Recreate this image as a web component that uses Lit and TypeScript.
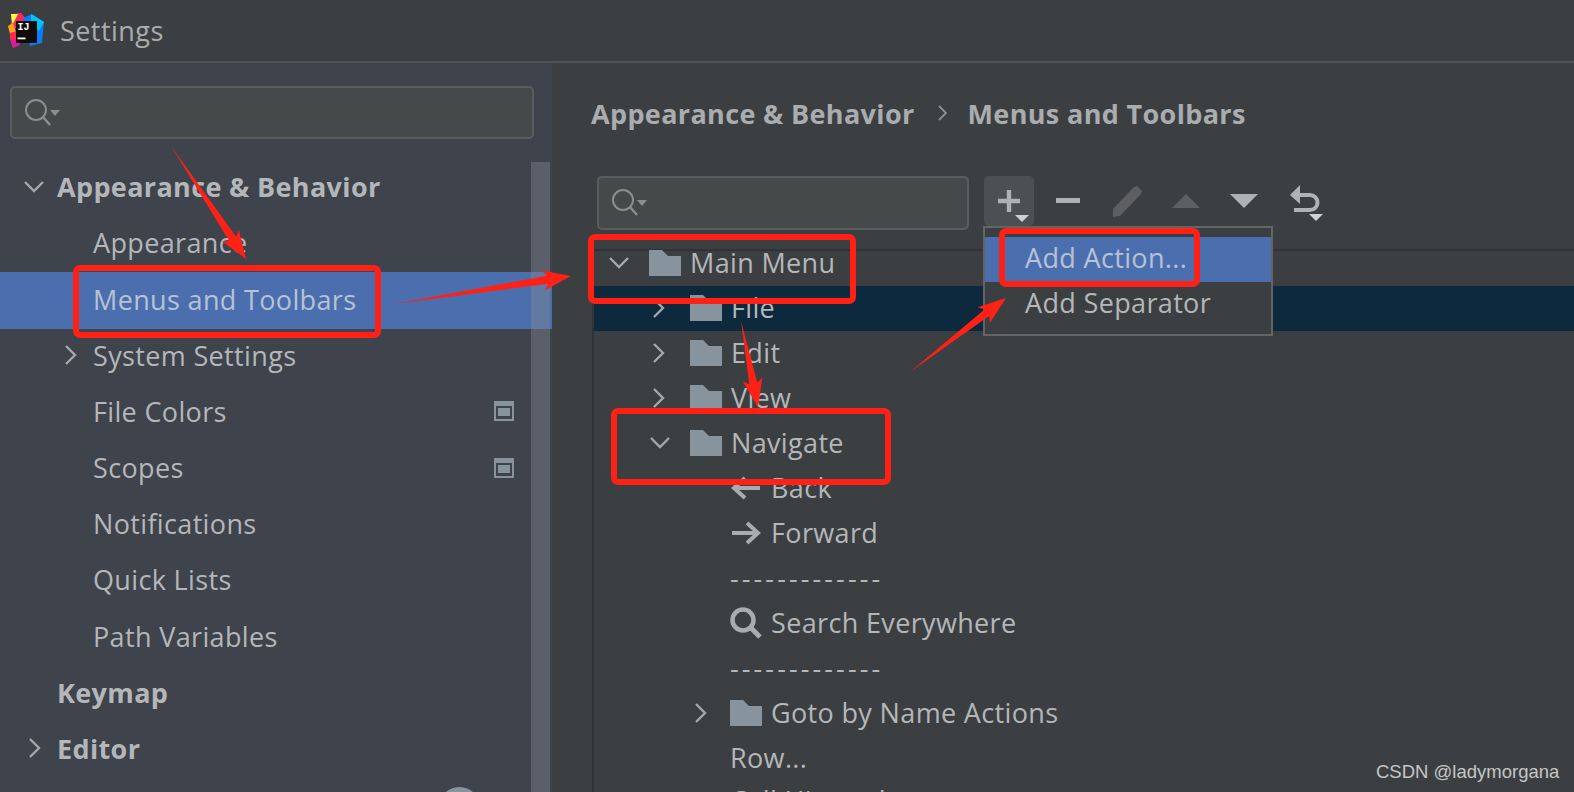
import { LitElement, html, css, svg } from "lit";
import { customElement } from "lit/decorators.js";

const chevD = html`<svg width="24" height="24" viewBox="0 0 24 24"><path d="M3 7l9 9 9-9" fill="none" stroke="#a4a8aa" stroke-width="2.4"/></svg>`;
const chevR = html`<svg width="24" height="24" viewBox="0 0 24 24"><path d="M6 3l9 9-9 9" fill="none" stroke="#a4a8aa" stroke-width="2.4"/></svg>`;
const folder = html`<svg width="32" height="26" viewBox="0 0 32 26"><path d="M0 0h13l6 6h13v20H0z" fill="#87949e"/></svg>`;
const searchIcon = html`<svg width="36" height="30" viewBox="0 0 36 30"><circle cx="12" cy="12" r="10" fill="none" stroke="#8a8f92" stroke-width="2"/><path d="M19 19l7 8" stroke="#8a8f92" stroke-width="2.4"/><path d="M26 12h10l-5 6z" fill="#8a8f92"/></svg>`;
const projIcon = html`<svg class="proj" width="20" height="20" viewBox="0 0 20 20"><rect x="1" y="1" width="18" height="18" fill="none" stroke="#87949e" stroke-width="2"/><rect x="1" y="1" width="18" height="4" fill="#87949e"/><rect x="4" y="7" width="12" height="8" fill="#87949e"/></svg>`;

const arrow = (x1: number, y1: number, x2: number, y2: number) => {
  const len = Math.hypot(x2 - x1, y2 - y1);
  const ux = (x2 - x1) / len, uy = (y2 - y1) / len;
  const nx = -uy, ny = ux;
  const at = (d: number, w: number) => `${(x1 + ux * d + nx * w).toFixed(1)},${(y1 + uy * d + ny * w).toFixed(1)}`;
  const pts = [at(0, 0), at(len - 24, 4), at(len - 28, 10), at(len, 0), at(len - 28, -10), at(len - 24, -4)].join(" ");
  return svg`<polygon points=${pts} fill="#ff2116"/>`;
};

@customElement("app-root")
export class AppRoot extends LitElement {
  static styles = css`
    :host { display: block; width: 1574px; height: 792px; overflow: hidden; position: relative; background: #3c3f41;
      font-family: "Open Sans", "Noto Sans", sans-serif; font-size: 27px; color: #b4b7b9; letter-spacing: 0.35px; }
    .title { height: 61px; display: flex; align-items: center; gap: 16px; padding-left: 8px; border-bottom: 2px solid #505253; }
    .title span { color: #a9adaf; letter-spacing: 0.45px; }
    .body { display: flex; height: 729px; }
    .side { width: 552px; flex: none; background: #3f434c; position: relative; padding-top: 23px; box-sizing: border-box; overflow: hidden; }
    .search { box-sizing: border-box; background: #45494a; border: 2px solid #5a5d5e; border-radius: 5px; display: flex; align-items: center; padding-left: 12px; flex: none; }
    .side .search { width: 524px; height: 53px; margin-left: 10px; margin-bottom: 21px; }
    .rows { display: flex; flex-direction: column; }
    .srow { height: 56.2px; flex: none; box-sizing: border-box; padding-bottom: 3px; display: flex; align-items: center; position: relative; white-space: nowrap; }
    .srow.b { font-weight: 700; padding-left: 57px; }
    .srow.i { padding-left: 93px; }
    .srow.sel { background: #4b6eaf; color: #b7c2d4; height: 57px; margin-bottom: -0.8px; }
    .srow .chev { position: absolute; left: 22px; display: flex; }
    .srow.i .chev { left: 60px; }
    .srow.b .chev.r { left: 24px; }
    .proj { position: absolute; left: 494px; }
    .bar { position: absolute; left: 531px; top: 99px; width: 19px; bottom: 0; background: rgba(130,135,145,0.42); }
    .blob { position: absolute; left: 439px; top: 724px; width: 41px; height: 41px; border-radius: 50%; background: #87949e; }
    .main { flex: 1; display: flex; flex-direction: column; padding-left: 40px; min-width: 0; overflow: hidden; }
    .crumb { flex: none; height: 50px; margin: 25px 0 0 -1px; display: flex; align-items: center; font-weight: 700; color: #a9adaf; white-space: nowrap; }
    .crumb svg { margin: 0 21px 0 23px; }
    .tools { flex: none; display: flex; align-items: flex-start; margin-top: 38px; height: 65px; padding-left: 5px; box-sizing: border-box; }
    .tools .search { width: 372px; height: 54px; }
    .tbtn { width: 50px; height: 50px; margin-left: 9px; flex: none; display: flex; align-items: center; justify-content: center; border-radius: 5px; }
    .tbtn.on { margin-left: 15px; background: #4c5052; }
    .tbtn.m { margin-left: 10px; }
    .tbtn.n { margin-left: 8px; }
    .tbtn.u { margin-left: 14px; padding-top: 6px; box-sizing: border-box; }
    .tree { flex: none; position: relative; border-left: 2px solid #323232; }
    .tree::before { content: ""; position: absolute; left: 0; right: 0; top: 8px; height: 2px; background: #323232; }
    .trow { height: 45px; box-sizing: border-box; padding-bottom: 2px; display: flex; align-items: center; white-space: nowrap; position: relative; }
    .trow svg { flex: none; }
    .trow.dark { background: #0d293e; }
    .fold { display: flex; margin: 0 9px 0 18px; }
    .t1 { padding-left: 13px; }
    .t2 { padding-left: 54px; }
    .t3 { padding-left: 136px; gap: 9px; }
    .t3b { padding-left: 96px; }
    .t3b .fold { margin-left: 16px; }
    .last { margin-top: -2px; }
    .dash { letter-spacing: 3.1px; }
    .popup { position: absolute; left: 983px; top: 226px; width: 290px; height: 110px; box-sizing: border-box; border: 2px solid #646464; background: #3c3f41; padding-top: 9px; }
    .pitem { height: 45px; box-sizing: border-box; padding: 0 0 4px 40px; display: flex; align-items: center; }
    .pitem.sel { background: #4b6eaf; color: #b7c2d4; }
    .wm { position: absolute; left: 1376px; top: 761px; font-family: "Liberation Sans", Arial, sans-serif; font-size: 18.5px; color: #c4c6c6; letter-spacing: 0; white-space: nowrap; }
    .anno { position: absolute; left: 0; top: 0; pointer-events: none; }
  `;

  render() {
    const srow = (t: string, cls: string, ch?: any, proj = false) => html`<div class="srow ${cls}">${ch ? html`<span class="chev ${ch === chevR ? "r" : ""}">${ch}</span>` : ""}${t}${proj ? projIcon : ""}</div>`;
    const node = (ch: any, t: string) => html`${ch}<span class="fold">${folder}</span><span>${t}</span>`;
    return html`
      <div class="title">
        <svg width="36" height="36" viewBox="0 0 36 36">
          <path d="M3 1L13 0 18 6 16 16 0 14 4 9z" fill="#fe2857"/>
          <path d="M3 1l7 0-4 8-2 2z" fill="#fcf84a"/>
          <path d="M0 13l5-3 3 9-6 2z" fill="#f9a51a"/>
          <path d="M2 20l7-2 2 14-6 3-3-9z" fill="#fe2857"/>
          <path d="M3 27l8-2 1 7-7 3z" fill="#dd1c9b"/>
          <path d="M15 5l9-4 12 8-2 21-12 3z" fill="#087cfa"/>
          <path d="M23 1l13 8-5 9-8-8z" fill="#07c3f2"/>
          <rect x="8" y="8" width="21" height="22" fill="#100c0c"/>
          <text x="9.500" y="17" font-family="Liberation Mono, monospace" font-weight="700" font-size="10" letter-spacing="0" fill="#fff">IJ</text>
          <rect x="9.500" y="24.500" width="8" height="1.800" fill="#fff"/>
        </svg>
        <span>Settings</span>
      </div>
      <div class="body">
        <div class="side">
          <div class="search">${searchIcon}</div>
          <div class="rows">
            ${srow("Appearance & Behavior", "b", chevD)}
            ${srow("Appearance", "i")}
            ${srow("Menus and Toolbars", "i sel")}
            ${srow("System Settings", "i", chevR)}
            ${srow("File Colors", "i", null, true)}
            ${srow("Scopes", "i", null, true)}
            ${srow("Notifications", "i")}
            ${srow("Quick Lists", "i")}
            ${srow("Path Variables", "i")}
            ${srow("Keymap", "b")}
            ${srow("Editor", "b", chevR)}
          </div>
          <div class="bar"></div>
          <div class="blob"></div>
        </div>
        <div class="main">
          <div class="crumb">Appearance &amp; Behavior
            <svg width="9" height="18" viewBox="0 0 9 18"><path d="M1 2l7 7-7 7" fill="none" stroke="#8c9092" stroke-width="1.8"/></svg>
            Menus and Toolbars</div>
          <div class="tools">
            <div class="search">${searchIcon}</div>
            <div class="tbtn on"><svg width="50" height="50" viewBox="0 0 50 50"><path d="M14 25h22M25 14v22" stroke="#afb1b3" stroke-width="4.400"/><path d="M31 39h14l-7 7z" fill="#ced0d6"/></svg></div>
            <div class="tbtn m"><svg width="26" height="6" viewBox="0 0 26 6"><rect width="24" height="5" fill="#afb1b3"/></svg></div>
            <div class="tbtn"><svg width="32" height="32" viewBox="0 0 32 32"><path d="M1 32v-8L22 2l3-1 5 5-1 3L8 31z" fill="#5d5f61"/></svg></div>
            <div class="tbtn n"><svg width="28" height="14" viewBox="0 0 28 14"><path d="M14 0l14 14H0z" fill="#5d5f61"/></svg></div>
            <div class="tbtn n"><svg width="28" height="14" viewBox="0 0 28 14"><path d="M0 0h28L14 14z" fill="#afb1b3"/></svg></div>
            <div class="tbtn u"><svg width="36" height="38" viewBox="0 0 36 38"><path d="M6 10h14a7.500 7.500 0 0 1 0 15H4" fill="none" stroke="#afb1b3" stroke-width="4"/><path d="M10 0v19L0 10z" fill="#afb1b3"/><path d="M19 29h14l-7 7z" fill="#ced0d6"/></svg></div>
          </div>
          <div class="tree">
            <div class="trow t1">${node(chevD, "Main Menu")}</div>
            <div class="trow t2 dark">${node(chevR, "File")}</div>
            <div class="trow t2">${node(chevR, "Edit")}</div>
            <div class="trow t2">${node(chevR, "View")}</div>
            <div class="trow t2">${node(chevD, "Navigate")}</div>
            <div class="trow t3"><svg width="32" height="26" viewBox="0 0 32 26"><path d="M30 13H5M15 3L4 13l11 10" fill="none" stroke="#a9acae" stroke-width="4"/></svg><span>Back</span></div>
            <div class="trow t3"><svg width="32" height="26" viewBox="0 0 32 26"><path d="M2 13h25M17 3l11 10-11 10" fill="none" stroke="#a9acae" stroke-width="4"/></svg><span>Forward</span></div>
            <div class="trow t3"><span class="dash">-------------</span></div>
            <div class="trow t3"><svg width="32" height="32" viewBox="0 0 32 32"><circle cx="13" cy="13" r="10.500" fill="none" stroke="#a9acae" stroke-width="4.500"/><path d="M20 20l10 10" stroke="#a9acae" stroke-width="5"/></svg><span>Search Everywhere</span></div>
            <div class="trow t3"><span class="dash">-------------</span></div>
            <div class="trow t3b">${node(chevR, "Goto by Name Actions")}</div>
            <div class="trow t3"><span>Row...</span></div>
            <div class="trow t3 last"><span>Call Hierarchy</span></div>
          </div>
        </div>
      </div>
      <div class="popup">
        <div class="pitem sel">Add Action...</div>
        <div class="pitem">Add Separator</div>
      </div>
      <svg class="anno" width="1574" height="792" viewBox="0 0 1574 792">
        ${[[76, 268, 302, 67], [591, 237, 262, 64], [614, 411, 274, 71], [1002, 231, 195, 53]].map(([x, y, w, h]) => svg`<rect x=${x} y=${y} width=${w} height=${h} rx="4" fill="none" stroke="#ff2116" stroke-width="6"/>`)}
        ${arrow(171, 146, 246, 259)}
        ${arrow(394, 304, 571, 276)}
        ${arrow(741, 321, 758, 407)}
        ${arrow(910, 372, 1006, 298)}
      </svg>
      <div class="wm">CSDN @ladymorgana</div>
    `;
  }
}
